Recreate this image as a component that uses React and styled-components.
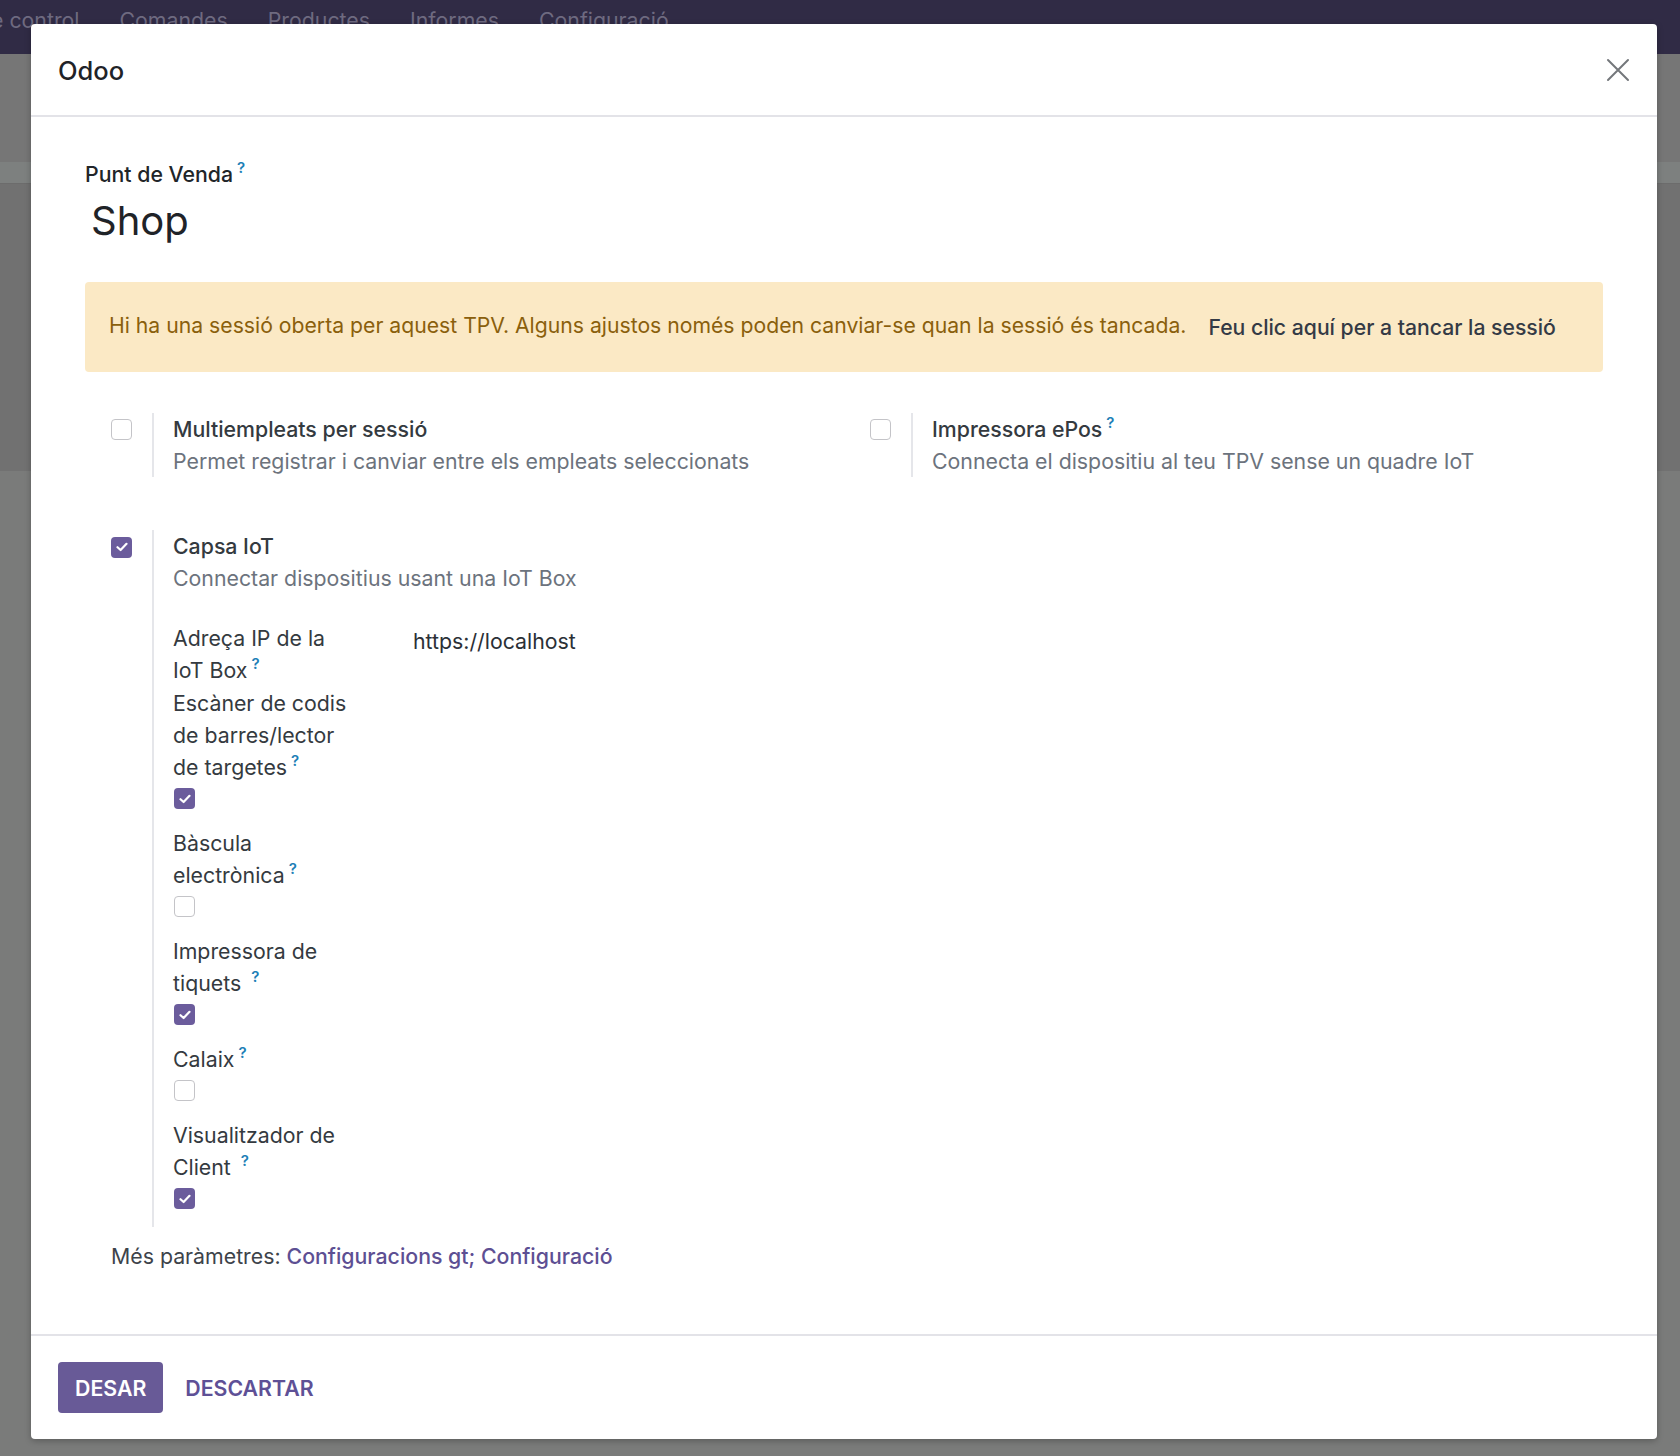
import styled, { createGlobalStyle } from 'styled-components'

const GlobalStyle = createGlobalStyle`
  html, body {
    margin: 0;
    padding: 0;
  }
  body {
    font-family: Inter, "Noto Sans", "Liberation Sans", sans-serif;
    color: #343a40;
  }
  * { box-sizing: border-box; }
`

const menuItems = ["e control", "Comandes", "Productes", "Informes", "Configuració"]

const settingsTop = [
  {
    title: "Multiempleats per sessió",
    desc: "Permet registrar i canviar entre els empleats seleccionats",
    checked: false,
    help: false
  },
  {
    title: "Impressora ePos",
    desc: "Connecta el dispositiu al teu TPV sense un quadre IoT",
    checked: false,
    help: true
  }
]

const iotFields = [
  { label: ["Escàner de codis", "de barres/lector", "de targetes"], checked: true },
  { label: ["Bàscula", "electrònica"], checked: false },
  { label: ["Impressora de", "tiquets "], checked: true },
  { label: ["Calaix"], checked: false },
  { label: ["Visualitzador de", "Client "], checked: true }
]

const Page = styled.div`
  position: relative;
  width: 1680px;
  height: 1456px;
  overflow: hidden;
  background: #7a7b7a;
`

const Navbar = styled.div`
  height: 54px;
  background: #302b45;
  display: flex;
  gap: 40px;
  padding: 6px 0 0 0;
  margin-left: -9px;
`

const MenuItem = styled.span`
  font-size: 21.3px;
  color: #6e6a80;
  line-height: 28px;
  white-space: nowrap;
`

const ControlPanel = styled.div`
  height: 130px;
  background: #767676;
  border-bottom: 1px solid #6c6c6c;
  display: flex;
  flex-direction: column;
  justify-content: flex-end;
`

const PanelStripe = styled.div`
  height: 21px;
  background: #7d807f;
`

const ListArea = styled.div`
  height: 287px;
  background: #717171;
`

const Modal = styled.div`
  position: absolute;
  left: 31px;
  top: 24px;
  width: 1626px;
  height: 1415px;
  background: #fff;
  border-radius: 4px;
  box-shadow: 0 2px 6px rgba(0, 0, 0, 0.25);
  display: flex;
  flex-direction: column;
`

const Header = styled.div`
  height: 93px;
  flex-shrink: 0;
  border-bottom: 2px solid #e3e3e8;
  display: flex;
  align-items: center;
  justify-content: space-between;
  padding: 0 26px 0 27px;
`

const Title = styled.h4`
  margin: 0 0 -2px 0;
  font-size: 25.5px;
  font-weight: 500;
  color: #1f2328;
`

const CloseButton = styled.button`
  border: 0;
  background: none;
  padding: 0;
  width: 26px;
  height: 26px;
  display: flex;
  align-items: center;
  justify-content: center;
  cursor: pointer;
`

const Body = styled.div`
  flex: 1;
  padding: 41px 54px 0 54px;
`

const FieldLabel = styled.div`
  font-size: 21.3px;
  font-weight: 500;
  color: #212529;
  line-height: 32px;
`

const Help = styled.sup`
  color: #1d7fb7;
  font-size: 15px;
  font-weight: 600;
  line-height: 1;
  margin-left: 4px;
  vertical-align: 0;
  position: relative;
  top: -9px;
`

const NameInput = styled.div`
  font-size: 40px;
  line-height: 60px;
  color: #1f2328;
  padding-left: 6px;
  margin-top: 1px;
`

const Alert = styled.div`
  margin-top: 31px;
  height: 90px;
  background: #fbe9c5;
  border-radius: 4px;
  display: flex;
  align-items: center;
  gap: 22px;
  padding: 0 24px;
`

const AlertText = styled.span`
  font-size: 21.2px;
  color: #8a5f0c;
  margin-top: -4px;
  white-space: nowrap;
`

const AlertLink = styled.span`
  font-size: 21.2px;
  font-weight: 500;
  color: #343a45;
  white-space: nowrap;
`

const SettingsGrid = styled.div`
  display: grid;
  grid-template-columns: 1fr 1fr;
  row-gap: 53px;
  margin-top: 41px;
`

const SettingBox = styled.div`
  display: flex;
`

const LeftPane = styled.div`
  width: 67px;
  flex-shrink: 0;
  padding: 6px 0 0 26px;
`

const RightPane = styled.div`
  border-left: 2px solid #e5e6ea;
  padding: 0 0 0 19px;
  flex: 1;
`

const SettingTitle = styled.div`
  font-size: 21.3px;
  font-weight: 500;
  line-height: 32px;
  color: #343a40;
`

const SettingDesc = styled.div`
  font-size: 21.3px;
  line-height: 32px;
  color: #6c737d;
`

const Box = styled.span`
  display: inline-flex;
  align-items: center;
  justify-content: center;
  width: 21px;
  height: 21px;
  border-radius: 4px;
  background: ${props => props.checked ? "#6b5c9c" : "#fff"};
  border: ${props => props.checked ? "none" : "1.5px solid #c4c4c8"};
`

const SubFields = styled.div`
  margin-top: 28px;
`

const IpRow = styled.div`
  display: grid;
  grid-template-columns: 240px 1fr;
  margin-bottom: 1px;
`

const SubLabel = styled.div`
  font-size: 21.3px;
  line-height: 32px;
  color: #343a40;
  width: 184px;
`

const IpValue = styled.div`
  font-size: 21.3px;
  line-height: 32px;
  color: #2b3036;
  padding-top: 3px;
`

const BoolField = styled.div`
  margin-bottom: 12px;
`

const CheckLine = styled.div`
  height: 32px;
  display: flex;
  align-items: flex-start;
  padding: 5px 0 0 1px;
`

const MoreParams = styled.div`
  margin: 13px 0 0 26px;
  font-size: 21.3px;
  line-height: 32px;
  color: #3d434a;
`

const ParamLink = styled.span`
  color: #5d4f93;
  font-weight: 500;
`

const Footer = styled.div`
  height: 105px;
  flex-shrink: 0;
  border-top: 2px solid #e3e3e8;
  display: flex;
  align-items: center;
  gap: 22px;
  padding: 0 27px;
`

const PrimaryButton = styled.button`
  height: 51px;
  padding: 0 17px;
  border: 0;
  border-radius: 4px;
  background: #685a97;
  color: #fff;
  font-family: inherit;
  font-size: 21.3px;
  font-weight: 600;
  text-transform: uppercase;
`

const SecondaryButton = styled.button`
  height: 51px;
  padding: 0;
  border: 0;
  background: none;
  color: #5e5096;
  font-family: inherit;
  font-size: 21.3px;
  font-weight: 600;
  text-transform: uppercase;
`

function Checkbox({ checked }) {
  return (
    <Box checked={checked}>
      {checked && (
        <svg width="12" height="10" viewBox="0 0 12 10">
          <path d="M1.5 5.2 L4.6 8 L10.5 1.8" fill="none" stroke="#fff" strokeWidth="2.2" strokeLinecap="round" strokeLinejoin="round" />
        </svg>
      )}
    </Box>
  )
}

function Lines({ lines, help }) {
  return (
    <SubLabel>
      {lines.map((line, i) => (
        <div key={i}>
          {line}
          {help && i === lines.length - 1 && <Help>?</Help>}
        </div>
      ))}
    </SubLabel>
  )
}

function App() {
  return (
    <Page>
      <GlobalStyle />
      <Navbar>
        {menuItems.map(item => <MenuItem key={item}>{item}</MenuItem>)}
      </Navbar>
      <ControlPanel>
        <PanelStripe />
      </ControlPanel>
      <ListArea />

      <Modal>
        <Header>
          <Title>Odoo</Title>
          <CloseButton aria-label="Close">
            <svg width="24" height="24" viewBox="0 0 24 24">
              <path d="M2 2 L22 22 M22 2 L2 22" stroke="#74777b" strokeWidth="2" strokeLinecap="round" />
            </svg>
          </CloseButton>
        </Header>

        <Body>
          <FieldLabel>Punt de Venda<Help>?</Help></FieldLabel>
          <NameInput>Shop</NameInput>

          <Alert>
            <AlertText>Hi ha una sessió oberta per aquest TPV. Alguns ajustos només poden canviar-se quan la sessió és tancada.</AlertText>
            <AlertLink>Feu clic aquí per a tancar la sessió</AlertLink>
          </Alert>

          <SettingsGrid>
            {settingsTop.map(s => (
              <SettingBox key={s.title}>
                <LeftPane><Checkbox checked={s.checked} /></LeftPane>
                <RightPane>
                  <SettingTitle>{s.title}{s.help && <Help>?</Help>}</SettingTitle>
                  <SettingDesc>{s.desc}</SettingDesc>
                </RightPane>
              </SettingBox>
            ))}

            <SettingBox>
              <LeftPane><Checkbox checked /></LeftPane>
              <RightPane>
                <SettingTitle>Capsa IoT</SettingTitle>
                <SettingDesc>Connectar dispositius usant una IoT Box</SettingDesc>
                <SubFields>
                  <IpRow>
                    <Lines lines={["Adreça IP de la", "IoT Box"]} help />
                    <IpValue>https://localhost</IpValue>
                  </IpRow>
                  {iotFields.map((f, i) => (
                    <BoolField key={i}>
                      <Lines lines={f.label} help />
                      <CheckLine><Checkbox checked={f.checked} /></CheckLine>
                    </BoolField>
                  ))}
                </SubFields>
              </RightPane>
            </SettingBox>
          </SettingsGrid>

          <MoreParams>
            Més paràmetres: <ParamLink>Configuracions gt; Configuració</ParamLink>
          </MoreParams>
        </Body>

        <Footer>
          <PrimaryButton>Desar</PrimaryButton>
          <SecondaryButton>Descartar</SecondaryButton>
        </Footer>
      </Modal>
    </Page>
  )
}

export default App
